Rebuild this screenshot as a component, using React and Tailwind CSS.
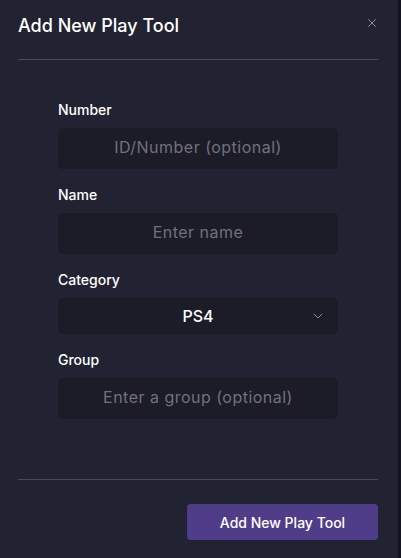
import {ChevronDown, X} from 'lucide-react';

const fields = [
    {label: 'Number', placeholder: 'ID/Number (optional)'},
    {label: 'Name', placeholder: 'Enter name'},
];

function Field({label, children}) {
    return (
        <div className="flex flex-col">
            <label className="text-[14px] font-medium text-white leading-[20px] mb-[8px]">{label}</label>
            {children}
        </div>
    );
}

function TextInput({placeholder}) {
    return (
        <input
            type="text"
            placeholder={placeholder}
            className="h-[41px] w-[280px] rounded-[5px] bg-[#1b1c27] pb-[3px] text-center text-[16px] tracking-[0.03em] text-white placeholder:text-[#70717d] outline-none"
        />
    );
}

export default function App() {
    return (
        <div className="flex h-[558px] w-[401px] bg-[#14151c]" style={{fontFamily: 'Inter, "Open Sans", sans-serif'}}>
            <div className="flex h-full w-[398px] flex-col bg-[#222332] pl-[18px] pr-[20px]">
                {/* Header */}
                <div className="flex items-start justify-between pt-[12px] pb-[20px]">
                    <h2 className="text-[18px] font-medium leading-[27px] text-white">Add New Play Tool</h2>
                    <button className="mt-[4px] mr-[-1px] text-[#9a9bab]">
                        <X className="h-[14px] w-[14px]" strokeWidth={1.5}/>
                    </button>
                </div>
                <div className="h-px w-[360px] bg-[#4a4b5a]"/>

                {/* Body */}
                <div className="flex flex-1 flex-col gap-[16px] pl-[40px] pt-[40px]">
                    {fields.map((f) => (
                        <Field key={f.label} label={f.label}>
                            <TextInput placeholder={f.placeholder}/>
                        </Field>
                    ))}
                    <Field label="Category">
                        <div className="relative flex h-[36px] w-[280px] items-center justify-center rounded-[5px] bg-[#1b1c27]">
                            <span className="text-[16px] font-medium text-white">PS4</span>
                            <ChevronDown className="absolute right-[12px] h-[16px] w-[16px] text-[#8a8b99]" strokeWidth={1.5}/>
                        </div>
                    </Field>
                    <Field label="Group">
                        <TextInput placeholder="Enter a group (optional)"/>
                    </Field>
                </div>

                <div className="h-px w-[360px] bg-[#4a4b5a]"/>

                {/* Footer */}
                <div className="flex justify-end pt-[24px] pb-[18px]">
                    <button className="h-[36px] w-[191px] rounded-[4px] bg-[#4f3d8a] text-[14px] font-medium text-white">
                        Add New Play Tool
                    </button>
                </div>
            </div>
        </div>
    );
}
